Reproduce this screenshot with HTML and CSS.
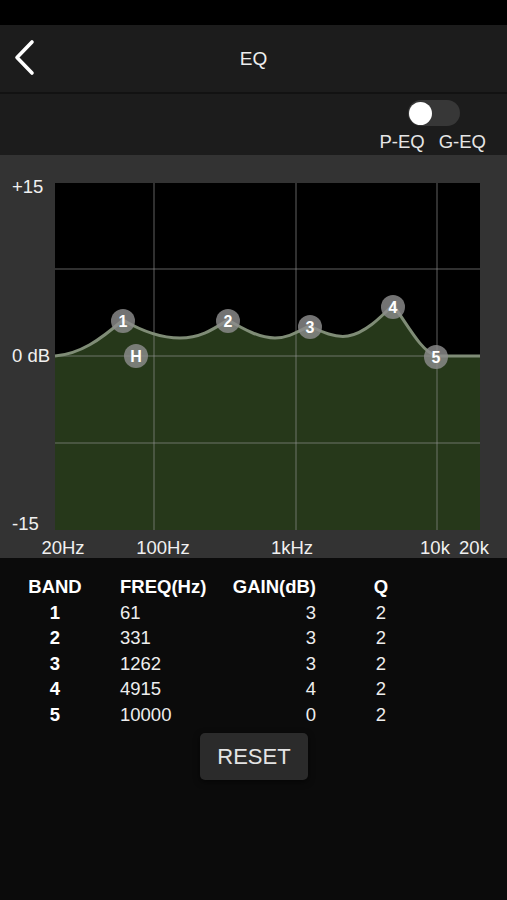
FILE: index.html
```html
<!DOCTYPE html>
<html lang="en">
<head>
  <meta charset="UTF-8">
  <meta name="viewport" content="width=device-width, initial-scale=1.0">
  <title>EQ</title>
  <link rel="stylesheet" href="styles.css">
</head>
<body>
  <div class="status-bar"></div>

  <header class="top-bar">
    <button class="back" aria-label="Back">
      <svg width="24" height="40" viewBox="0 0 24 40">
        <path d="M19 4 L4 19.5 L19 35" fill="none" stroke="#fff" stroke-width="3.6" stroke-linecap="round" stroke-linejoin="round"/>
      </svg>
    </button>
    <h1>EQ</h1>
  </header>

  <div class="mode-bar">
    <div class="mode">
      <div class="switch"><span class="knob"></span></div>
      <div class="mode-labels"><span>P-EQ</span><span>G-EQ</span></div>
    </div>
  </div>

  <section class="graph">
    <svg width="507" height="403" viewBox="0 0 507 403">
      <rect x="55" y="28" width="425" height="347" fill="#000"/>
      <!-- response curve -->
      <path class="fill" d="M55,201 C80,199 100,185 123,165 C140,175 160,183 180,183 C200,183 212,175 228,165 C245,175 260,183 275,183 C290,183 300,175 310,171 C322,177 335,183 348,181 C365,178 380,163 393,150 C408,170 420,195 436,201 L480,201 L480,375 L55,375 Z"/>
      <!-- grid -->
      <g class="grid">
        <line x1="154" y1="28" x2="154" y2="375"/>
        <line x1="296" y1="28" x2="296" y2="375"/>
        <line x1="437" y1="28" x2="437" y2="375"/>
        <line x1="55" y1="114" x2="480" y2="114"/>
        <line x1="55" y1="201" x2="480" y2="201"/>
        <line x1="55" y1="288" x2="480" y2="288"/>
      </g>
      <path class="line" d="M55,201 C80,199 100,185 123,165 C140,175 160,183 180,183 C200,183 212,175 228,165 C245,175 260,183 275,183 C290,183 300,175 310,171 C322,177 335,183 348,181 C365,178 380,163 393,150 C408,170 420,195 436,201 L480,201"/>

      <g class="node"><circle cx="123" cy="166" r="12"/><text x="123" y="172">1</text></g>
      <g class="node"><circle cx="136" cy="201" r="12"/><text x="136" y="207">H</text></g>
      <g class="node"><circle cx="228" cy="166" r="12"/><text x="228" y="172">2</text></g>
      <g class="node"><circle cx="310" cy="172" r="12"/><text x="310" y="178">3</text></g>
      <g class="node"><circle cx="393" cy="152" r="12"/><text x="393" y="158">4</text></g>
      <g class="node"><circle cx="436" cy="202" r="12"/><text x="436" y="208">5</text></g>

      <g class="axis">
        <text x="12" y="38">+15</text>
        <text x="12" y="207">0 dB</text>
        <text x="12" y="375">-15</text>
        <text class="mid" x="63" y="399">20Hz</text>
        <text class="mid" x="163" y="399">100Hz</text>
        <text class="mid" x="292" y="399">1kHz</text>
        <text class="mid" x="435" y="399">10k</text>
        <text class="mid" x="474" y="399">20k</text>
      </g>
    </svg>
  </section>

  <div class="bands">
    <div class="row head">
      <span class="c-band">BAND</span><span class="c-freq">FREQ(Hz)</span><span class="c-gain">GAIN(dB)</span><span class="c-q">Q</span>
    </div>
    <div class="row"><span class="c-band">1</span><span class="c-freq">61</span><span class="c-gain">3</span><span class="c-q">2</span></div>
    <div class="row"><span class="c-band">2</span><span class="c-freq">331</span><span class="c-gain">3</span><span class="c-q">2</span></div>
    <div class="row"><span class="c-band">3</span><span class="c-freq">1262</span><span class="c-gain">3</span><span class="c-q">2</span></div>
    <div class="row"><span class="c-band">4</span><span class="c-freq">4915</span><span class="c-gain">4</span><span class="c-q">2</span></div>
    <div class="row"><span class="c-band">5</span><span class="c-freq">10000</span><span class="c-gain">0</span><span class="c-q">2</span></div>
  </div>

  <div class="actions">
    <button class="reset">RESET</button>
  </div>
</body>
</html>
```

FILE: styles.css
```css
* { box-sizing: border-box; }
body {
  margin: 0; background: #0b0b0b; color: #fff;
  font-family: "Liberation Sans", Arial, sans-serif;
  width: 507px; min-height: 900px;
}
.status-bar { height: 25px; background: #000; }

.top-bar {
  height: 69px; background: #1c1c1c;
  border-bottom: 2px solid #121212;
  display: flex; align-items: center; position: relative;
}
.back {
  background: none; border: none; padding: 0;
  margin-left: 13px; margin-top: -2px; display: flex;
}
.top-bar h1 {
  position: absolute; left: 0; right: 0; top: 23px; margin: 0;
  text-align: center; font-size: 19px; font-weight: 400; color: #eee;
  line-height: 22px;
}

.mode-bar {
  height: 61px; background: #1c1c1c;
  display: flex; justify-content: flex-end;
}
.mode { display: flex; flex-direction: column; align-items: flex-end; padding: 6px 21px 0 0; }
.switch {
  width: 52px; height: 26px; border-radius: 13px; background: #373737;
  margin-right: 26px; display: flex; align-items: center; padding-left: 1px;
}
.knob { width: 23px; height: 23px; border-radius: 50%; background: #fff; }
.mode-labels {
  display: flex; gap: 14px; margin-top: 5px;
  font-size: 18.5px; color: #e6e6e6; line-height: 21px;
}

.graph { background: #333; height: 403px; }
.graph svg { display: block; }
.graph .fill { fill: #26381a; }
.graph .grid line { stroke: rgba(150,150,150,0.32); stroke-width: 2; }
.graph .line { fill: none; stroke: #7f8c76; stroke-width: 3; }
.graph .node circle { fill: rgba(140,140,140,0.82); }
.graph .node text {
  fill: #fff; font-size: 16px; font-weight: 700; text-anchor: middle;
  font-family: "Liberation Sans", Arial, sans-serif;
}
.graph .axis text {
  fill: #f0f0f0; font-size: 18.5px;
  font-family: "Liberation Sans", Arial, sans-serif;
}
.graph .axis .mid { text-anchor: middle; }

.bands { padding: 16px 0 0 28px; }
.row {
  display: grid; grid-template-columns: 54px 150px 84px 130px;
  line-height: 25.5px; font-size: 18.5px; color: #eee;
}
.row.head { font-weight: 700; color: #fff; }
.c-band { text-align: center; font-weight: 700; color: #fff; }
.c-freq { padding-left: 38px; }
.c-gain { text-align: right; }
.row.head .c-gain { margin-left: -8px; }
.c-q { text-align: center; }

.actions { display: flex; justify-content: center; margin-top: 6px; padding-left: 1px; }
.reset {
  width: 108px; height: 47px; border: none; border-radius: 5px;
  background: #2b2b2b; color: #e4e4e4;
  font-family: "Liberation Sans", Arial, sans-serif; font-size: 22px;
  box-shadow: 0 2px 6px rgba(0,0,0,0.6);
}
```
